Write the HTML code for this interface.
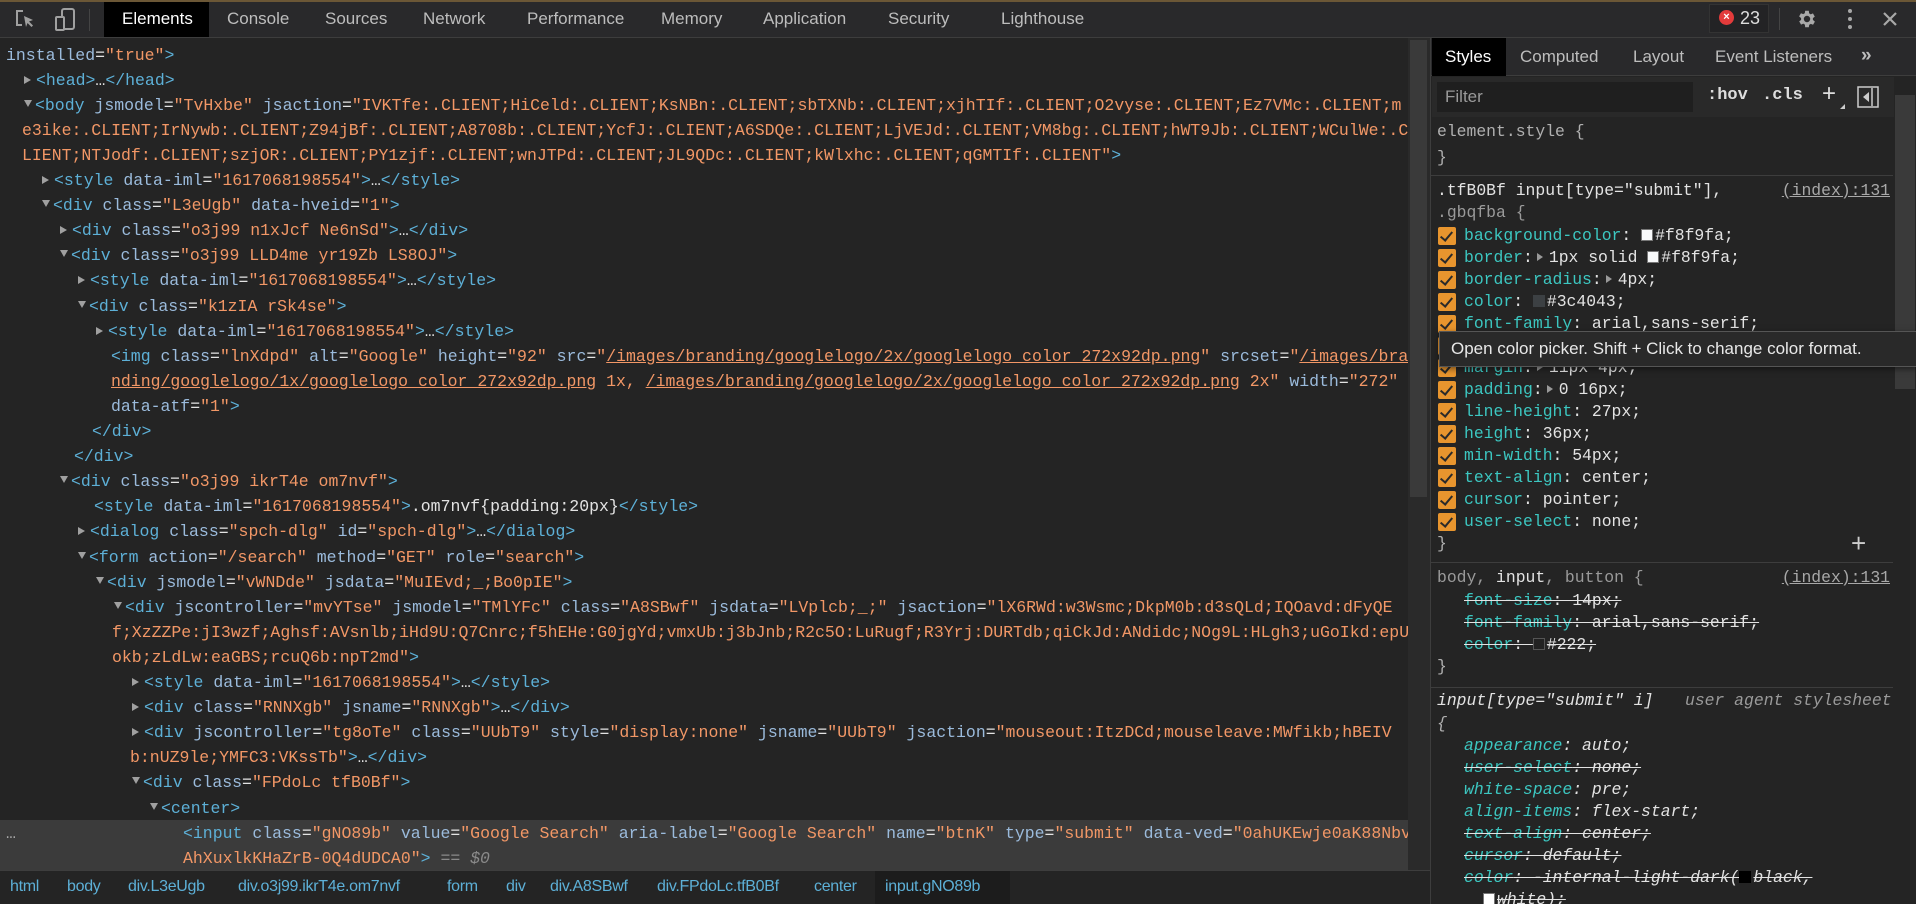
<!DOCTYPE html>
<html><head><meta charset="utf-8">
<style>
*{margin:0;padding:0;box-sizing:border-box}
body{width:1916px;height:904px;background:#242424;overflow:hidden;position:relative;font-family:"Liberation Sans",sans-serif;color:#e3e3e3}
.abs{position:absolute}
#tb{left:0;top:0;width:1916px;height:38px;background:#29292b;border-top:2px solid #6b5736;border-bottom:1px solid #3d3d3d;z-index:5}
.tab{position:absolute;top:7px;font-size:17px;color:#bdbdbd;white-space:nowrap;font-family:"Liberation Sans",sans-serif}
#el{left:0;top:38px;width:1408px;height:832px;overflow:hidden;font-family:"Liberation Mono",monospace;font-size:16.5px}
.r{position:absolute;left:0;height:25.1px;line-height:25.1px;white-space:pre;color:#e3e3e3}
.t{color:#5db0d7}.a{color:#9bbbdc}.v{color:#f29766}.u{text-decoration:underline}
.tri{display:inline-block;width:0;height:0;border-left:7px solid #a0a0a0;border-top:4.5px solid transparent;border-bottom:4.5px solid transparent;margin-right:5px;vertical-align:1px}
.tri.d{border-top:7px solid #a0a0a0;border-left:4.5px solid transparent;border-right:4.5px solid transparent;border-bottom:0;vertical-align:3px;margin-right:3px}
#sb{left:1430px;top:38px;width:486px;height:866px;background:#242424;border-left:1px solid #3d3d3d;font-family:"Liberation Mono",monospace;font-size:16.4px;overflow:hidden}
.s{position:absolute;left:33px;height:22px;line-height:22px;white-space:pre;color:#e3e3e3}
.p{color:#3cc7c1}
.cb{position:absolute;left:7px;width:18px;height:18px;background:#e8952e;border-radius:2px}
.cb:after{content:"";position:absolute;left:5px;top:2px;width:5px;height:10px;border-right:2.5px solid #2a2a2a;border-bottom:2.5px solid #2a2a2a;transform:rotate(40deg)}
.sw{display:inline-block;width:12px;height:12px;vertical-align:-1px;margin-right:2px;border:1px solid #777}
.ar{display:inline-block;width:0;height:0;border-left:6px solid #999;border-top:4px solid transparent;border-bottom:4px solid transparent;margin:0 6px 0 4px;vertical-align:1px}
.st{text-decoration:line-through}
.idx{position:absolute;right:26px;color:#a8a8a8;text-decoration:underline;white-space:pre}
.sep{position:absolute;left:0;width:462px;height:1px;background:#3d3d3d}
.bc{position:absolute;top:878px;font-size:16px;color:#5db0d7;white-space:nowrap;letter-spacing:-0.3px}
</style></head><body>

<div id="tb" class="abs">
  <svg class="abs" style="left:14px;top:6px" width="22" height="22" viewBox="0 0 22 22"><path d="M9 3H3v14h5" fill="none" stroke="#a0a0a0" stroke-width="2"/><path d="M10 8l9 4-4 1.5 4 4-1.5 1.5-4-4L12 19z" fill="#a0a0a0"/></svg>
  <svg class="abs" style="left:54px;top:5px" width="24" height="26" viewBox="0 0 24 26"><rect x="8" y="2" width="12" height="20" rx="2" fill="none" stroke="#a0a0a0" stroke-width="2"/><rect x="2" y="10" width="8" height="13" rx="1" fill="#29292b" stroke="#a0a0a0" stroke-width="2"/></svg>
  <div class="abs" style="left:89px;top:7px;width:1px;height:22px;background:#444"></div>
  <div class="abs" style="left:104px;top:0;width:105px;height:35px;background:#000"></div>
  <div class="tab" style="left:122px;color:#fff">Elements</div>
  <div class="tab" style="left:227px">Console</div>
  <div class="tab" style="left:325px">Sources</div>
  <div class="tab" style="left:423px">Network</div>
  <div class="tab" style="left:527px">Performance</div>
  <div class="tab" style="left:661px">Memory</div>
  <div class="tab" style="left:763px">Application</div>
  <div class="tab" style="left:888px">Security</div>
  <div class="tab" style="left:1001px">Lighthouse</div>
  <div class="abs" style="left:1709px;top:2px;width:60px;height:29px;background:#232325;border:1px solid #333"></div>
  <div class="abs" style="left:1719px;top:8px;width:15px;height:15px;border-radius:50%;background:#e33b3b;color:#fff;font-size:11px;line-height:15px;text-align:center;font-weight:bold">×</div>
  <div class="tab" style="left:1740px;top:6px;color:#ddd;font-size:18px">23</div>
  <div class="abs" style="left:1779px;top:6px;width:1px;height:22px;background:#444"></div>
  <svg class="abs" style="left:1796px;top:6px" width="22" height="22" viewBox="0 0 24 24"><path fill="#a8a8a8" d="M19.4 13a7.5 7.5 0 0 0 0-2l2.1-1.6-2-3.5-2.5 1a7 7 0 0 0-1.7-1L15 3h-4l-.4 2.7a7 7 0 0 0-1.7 1l-2.5-1-2 3.5L6.6 11a7.5 7.5 0 0 0 0 2l-2.1 1.6 2 3.5 2.5-1a7 7 0 0 0 1.7 1L11 21h4l.4-2.7a7 7 0 0 0 1.7-1l2.5 1 2-3.5zM13 15.5a3.5 3.5 0 1 1 0-7 3.5 3.5 0 0 1 0 7z" transform="translate(-1 0)"/></svg>
  <div class="abs" style="left:1848px;top:7px;width:4px;height:4px;border-radius:2px;background:#a8a8a8;box-shadow:0 8px 0 #a8a8a8,0 16px 0 #a8a8a8"></div>
  <svg class="abs" style="left:1882px;top:9px" width="16" height="16" viewBox="0 0 16 16"><path d="M2 2l12 12M14 2L2 14" stroke="#a8a8a8" stroke-width="2.2"/></svg>
</div>

<div id="el" class="abs">
<div class="r" style="top:-20.6px;left:6px"><span class="a">  http-equiv="Content-Type" content="text/html; charset=UTF-8" data-extension-version="3.0.0" data-extension-</span></div>
<div class="r" style="top:4.5px;left:6px"><span class="a">installed</span>=<span class="v">"true"</span><span class="t">&gt;</span></div>
<div class="r" style="top:29.6px;left:24px"><span class="tri"></span><span class="t">&lt;head&gt;</span>…<span class="t">&lt;/head&gt;</span></div>
<div class="r" style="top:54.7px;left:24px"><span class="tri d"></span><span class="t">&lt;body </span><span class="a">jsmodel</span>=<span class="v">"TvHxbe"</span> <span class="a">jsaction</span>=<span class="v">"IVKTfe:.CLIENT;HiCeld:.CLIENT;KsNBn:.CLIENT;sbTXNb:.CLIENT;xjhTIf:.CLIENT;O2vyse:.CLIENT;Ez7VMc:.CLIENT;m</span></div>
<div class="r" style="top:79.8px;left:22px"><span class="v">e3ike:.CLIENT;IrNywb:.CLIENT;Z94jBf:.CLIENT;A8708b:.CLIENT;YcfJ:.CLIENT;A6SDQe:.CLIENT;LjVEJd:.CLIENT;VM8bg:.CLIENT;hWT9Jb:.CLIENT;WCulWe:.C</span></div>
<div class="r" style="top:104.9px;left:22px"><span class="v">LIENT;NTJodf:.CLIENT;szjOR:.CLIENT;PY1zjf:.CLIENT;wnJTPd:.CLIENT;JL9QDc:.CLIENT;kWlxhc:.CLIENT;qGMTIf:.CLIENT"</span><span class="t">&gt;</span></div>
<div class="r" style="top:130px;left:42px"><span class="tri"></span><span class="t">&lt;style </span><span class="a">data-iml</span>=<span class="v">"1617068198554"</span><span class="t">&gt;</span>…<span class="t">&lt;/style&gt;</span></div>
<div class="r" style="top:155.1px;left:42px"><span class="tri d"></span><span class="t">&lt;div </span><span class="a">class</span>=<span class="v">"L3eUgb"</span> <span class="a">data-hveid</span>=<span class="v">"1"</span><span class="t">&gt;</span></div>
<div class="r" style="top:180.2px;left:60px"><span class="tri"></span><span class="t">&lt;div </span><span class="a">class</span>=<span class="v">"o3j99 n1xJcf Ne6nSd"</span><span class="t">&gt;</span>…<span class="t">&lt;/div&gt;</span></div>
<div class="r" style="top:205.3px;left:60px"><span class="tri d"></span><span class="t">&lt;div </span><span class="a">class</span>=<span class="v">"o3j99 LLD4me yr19Zb LS8OJ"</span><span class="t">&gt;</span></div>
<div class="r" style="top:230.4px;left:78px"><span class="tri"></span><span class="t">&lt;style </span><span class="a">data-iml</span>=<span class="v">"1617068198554"</span><span class="t">&gt;</span>…<span class="t">&lt;/style&gt;</span></div>
<div class="r" style="top:255.5px;left:78px"><span class="tri d"></span><span class="t">&lt;div </span><span class="a">class</span>=<span class="v">"k1zIA rSk4se"</span><span class="t">&gt;</span></div>
<div class="r" style="top:280.6px;left:96px"><span class="tri"></span><span class="t">&lt;style </span><span class="a">data-iml</span>=<span class="v">"1617068198554"</span><span class="t">&gt;</span>…<span class="t">&lt;/style&gt;</span></div>
<div class="r" style="top:305.7px;left:111px"><span class="t">&lt;img </span><span class="a">class</span>=<span class="v">"lnXdpd"</span> <span class="a">alt</span>=<span class="v">"Google"</span> <span class="a">height</span>=<span class="v">"92"</span> <span class="a">src</span>=<span class="v">"<span class="u">/images/branding/googlelogo/2x/googlelogo_color_272x92dp.png</span>"</span> <span class="a">srcset</span>=<span class="v">"<span class="u">/images/bra</span></span></div>
<div class="r" style="top:330.8px;left:111px"><span class="v"><span class="u">nding/googlelogo/1x/googlelogo_color_272x92dp.png</span> 1x, <span class="u">/images/branding/googlelogo/2x/googlelogo_color_272x92dp.png</span> 2x"</span> <span class="a">width</span>=<span class="v">"272"</span></div>
<div class="r" style="top:355.9px;left:111px"><span class="a">data-atf</span>=<span class="v">"1"</span><span class="t">&gt;</span></div>
<div class="r" style="top:381px;left:92px"><span class="t">&lt;/div&gt;</span></div>
<div class="r" style="top:406.1px;left:74px"><span class="t">&lt;/div&gt;</span></div>
<div class="r" style="top:431.2px;left:60px"><span class="tri d"></span><span class="t">&lt;div </span><span class="a">class</span>=<span class="v">"o3j99 ikrT4e om7nvf"</span><span class="t">&gt;</span></div>
<div class="r" style="top:456.3px;left:94px"><span class="t">&lt;style </span><span class="a">data-iml</span>=<span class="v">"1617068198554"</span><span class="t">&gt;</span>.om7nvf{padding:20px}<span class="t">&lt;/style&gt;</span></div>
<div class="r" style="top:481.4px;left:78px"><span class="tri"></span><span class="t">&lt;dialog </span><span class="a">class</span>=<span class="v">"spch-dlg"</span> <span class="a">id</span>=<span class="v">"spch-dlg"</span><span class="t">&gt;</span>…<span class="t">&lt;/dialog&gt;</span></div>
<div class="r" style="top:506.5px;left:78px"><span class="tri d"></span><span class="t">&lt;form </span><span class="a">action</span>=<span class="v">"/search"</span> <span class="a">method</span>=<span class="v">"GET"</span> <span class="a">role</span>=<span class="v">"search"</span><span class="t">&gt;</span></div>
<div class="r" style="top:531.6px;left:96px"><span class="tri d"></span><span class="t">&lt;div </span><span class="a">jsmodel</span>=<span class="v">"vWNDde"</span> <span class="a">jsdata</span>=<span class="v">"MuIEvd;_;Bo0pIE"</span><span class="t">&gt;</span></div>
<div class="r" style="top:556.7px;left:114px"><span class="tri d"></span><span class="t">&lt;div </span><span class="a">jscontroller</span>=<span class="v">"mvYTse"</span> <span class="a">jsmodel</span>=<span class="v">"TMlYFc"</span> <span class="a">class</span>=<span class="v">"A8SBwf"</span> <span class="a">jsdata</span>=<span class="v">"LVplcb;_;"</span> <span class="a">jsaction</span>=<span class="v">"lX6RWd:w3Wsmc;DkpM0b:d3sQLd;IQOavd:dFyQE</span></div>
<div class="r" style="top:581.8px;left:112px"><span class="v">f;XzZZPe:jI3wzf;Aghsf:AVsnlb;iHd9U:Q7Cnrc;f5hEHe:G0jgYd;vmxUb:j3bJnb;R2c5O:LuRugf;R3Yrj:DURTdb;qiCkJd:ANdidc;NOg9L:HLgh3;uGoIkd:epU</span></div>
<div class="r" style="top:606.9px;left:112px"><span class="v">okb;zLdLw:eaGBS;rcuQ6b:npT2md"</span><span class="t">&gt;</span></div>
<div class="r" style="top:632px;left:132px"><span class="tri"></span><span class="t">&lt;style </span><span class="a">data-iml</span>=<span class="v">"1617068198554"</span><span class="t">&gt;</span>…<span class="t">&lt;/style&gt;</span></div>
<div class="r" style="top:657.1px;left:132px"><span class="tri"></span><span class="t">&lt;div </span><span class="a">class</span>=<span class="v">"RNNXgb"</span> <span class="a">jsname</span>=<span class="v">"RNNXgb"</span><span class="t">&gt;</span>…<span class="t">&lt;/div&gt;</span></div>
<div class="r" style="top:682.2px;left:132px"><span class="tri"></span><span class="t">&lt;div </span><span class="a">jscontroller</span>=<span class="v">"tg8oTe"</span> <span class="a">class</span>=<span class="v">"UUbT9"</span> <span class="a">style</span>=<span class="v">"display:none"</span> <span class="a">jsname</span>=<span class="v">"UUbT9"</span> <span class="a">jsaction</span>=<span class="v">"mouseout:ItzDCd;mouseleave:MWfikb;hBEIV</span></div>
<div class="r" style="top:707.3px;left:130px"><span class="v">b:nUZ9le;YMFC3:VKssTb"</span><span class="t">&gt;</span>…<span class="t">&lt;/div&gt;</span></div>
<div class="r" style="top:732.4px;left:132px"><span class="tri d"></span><span class="t">&lt;div </span><span class="a">class</span>=<span class="v">"FPdoLc tfB0Bf"</span><span class="t">&gt;</span></div>
<div class="r" style="top:757.5px;left:150px"><span class="tri d"></span><span class="t">&lt;center&gt;</span></div>
<div class="abs" style="left:0;top:782px;width:1408px;height:50px;background:#3b3b3b"></div>
<div class="r" style="top:782.6px;left:6px;color:#aaa">…</div>
<div class="r" style="top:782.6px;left:183px"><span class="t">&lt;input </span><span class="a">class</span>=<span class="v">"gNO89b"</span> <span class="a">value</span>=<span class="v">"Google Search"</span> <span class="a">aria-label</span>=<span class="v">"Google Search"</span> <span class="a">name</span>=<span class="v">"btnK"</span> <span class="a">type</span>=<span class="v">"submit"</span> <span class="a">data-ved</span>=<span class="v">"0ahUKEwje0aK88Nbv</span></div>
<div class="r" style="top:807.7px;left:183px"><span class="v">AhXuxlkKHaZrB-0Q4dUDCA0"</span><span class="t">&gt;</span><span style="color:#8a8a8a"> == <i>$0</i></span></div>
</div>

<div class="abs" style="left:1408px;top:38px;width:22px;height:832px;background:#2a2a2a"></div>
<div class="abs" style="left:1410px;top:40px;width:17px;height:457px;background:#3a3a3a"></div>

<div class="abs" style="left:0;top:870px;width:1430px;height:34px;background:#242424;border-top:1px solid #3d3d3d"></div>
<div class="abs" style="left:875px;top:871px;width:135px;height:33px;background:#1c1c1c"></div>
<div class="bc" style="left:10px">html</div>
<div class="bc" style="left:67px">body</div>
<div class="bc" style="left:128px">div.L3eUgb</div>
<div class="bc" style="left:238px">div.o3j99.ikrT4e.om7nvf</div>
<div class="bc" style="left:447px">form</div>
<div class="bc" style="left:506px">div</div>
<div class="bc" style="left:550px">div.A8SBwf</div>
<div class="bc" style="left:657px">div.FPdoLc.tfB0Bf</div>
<div class="bc" style="left:814px">center</div>
<div class="bc" style="left:885px">input.gNO89b</div>

<div id="sb" class="abs">
  <div class="abs" style="left:0;top:0;width:486px;height:38px;border-bottom:1px solid #3d3d3d;background:#29292b"></div>
  <div class="abs" style="left:1px;top:0;width:74px;height:38px;background:#000"></div>
  <div class="tab" style="left:14px;top:9px;color:#fff">Styles</div>
  <div class="tab" style="left:89px;top:9px">Computed</div>
  <div class="tab" style="left:202px;top:9px">Layout</div>
  <div class="tab" style="left:284px;top:9px">Event Listeners</div>
  <div class="tab" style="left:430px;top:7px;font-weight:bold;font-size:19px">»</div>
  <div class="abs" style="left:1px;top:39px;width:462px;height:40px;background:#292929"></div>
  <div class="abs" style="left:6px;top:44px;width:256px;height:30px;background:#1f1f1f"></div>
  <div class="abs" style="left:14px;top:49px;font-size:17px;color:#9a9a9a;font-family:'Liberation Sans',sans-serif">Filter</div>
  <div class="abs" style="left:276px;top:48px;font-size:17px;color:#ddd;font-weight:bold;font-family:'Liberation Mono',monospace">:hov</div>
  <div class="abs" style="left:331px;top:48px;font-size:17px;color:#ddd;font-weight:bold;font-family:'Liberation Mono',monospace">.cls</div>
  <div class="abs" style="left:391px;top:42px;font-size:24px;color:#ddd;font-family:'Liberation Sans',sans-serif">+</div>
  <div class="abs" style="left:409px;top:66px;width:0;height:0;border-left:5px solid transparent;border-bottom:5px solid #ccc"></div>
  <svg class="abs" style="left:426px;top:48px" width="22" height="22" viewBox="0 0 22 22"><rect x="1" y="1" width="20" height="20" fill="none" stroke="#ccc" stroke-width="1.5"/><path d="M15 2v18" stroke="#ccc" stroke-width="1.5"/><path d="M12 6v10l-6-5z" fill="#ccc"/></svg>
  <div class="abs" style="left:464px;top:57px;width:20px;height:294px;background:#3a3a3a"></div>

  <div class="s" style="left:6px;top:83px;color:#b0b0b0">element.style {</div>
  <div class="s" style="left:6px;top:109px;color:#b0b0b0">}</div>
  <div class="sep" style="top:137px"></div>

  <div class="s" style="left:6px;top:142px">.tfB0Bf input[type="submit"],</div>
  <div class="idx" style="top:142px;line-height:22px">(index):131</div>
  <div class="s" style="left:6px;top:164px;color:#9a9a9a">.gbqfba {</div>

  <div class="cb" style="top:189px"></div><div class="s" style="top:187px"><span class="p">background-color</span>: <span class="sw" style="background:#f8f9fa"></span>#f8f9fa;</div>
  <div class="cb" style="top:211px"></div><div class="s" style="top:209px"><span class="p">border</span>:<span class="ar"></span>1px solid <span class="sw" style="background:#f8f9fa"></span>#f8f9fa;</div>
  <div class="cb" style="top:233px"></div><div class="s" style="top:231px"><span class="p">border-radius</span>:<span class="ar"></span>4px;</div>
  <div class="cb" style="top:255px"></div><div class="s" style="top:253px"><span class="p">color</span>: <span class="sw" style="background:#3c4043;border-color:#3c4043"></span>#3c4043;</div>
  <div class="cb" style="top:277px"></div><div class="s" style="top:275px"><span class="p">font-family</span>: arial,sans-serif;</div>
  <div class="cb" style="top:299px"></div><div class="s" style="top:297px"><span class="p">font-size</span>: 14px;</div>
  <div class="cb" style="top:321px"></div><div class="s" style="top:319px"><span class="p">margin</span>:<span class="ar"></span>11px 4px;</div>
  <div class="cb" style="top:343px"></div><div class="s" style="top:341px"><span class="p">padding</span>:<span class="ar"></span>0 16px;</div>
  <div class="cb" style="top:365px"></div><div class="s" style="top:363px"><span class="p">line-height</span>: 27px;</div>
  <div class="cb" style="top:387px"></div><div class="s" style="top:385px"><span class="p">height</span>: 36px;</div>
  <div class="cb" style="top:409px"></div><div class="s" style="top:407px"><span class="p">min-width</span>: 54px;</div>
  <div class="cb" style="top:431px"></div><div class="s" style="top:429px"><span class="p">text-align</span>: center;</div>
  <div class="cb" style="top:453px"></div><div class="s" style="top:451px"><span class="p">cursor</span>: pointer;</div>
  <div class="cb" style="top:475px"></div><div class="s" style="top:473px"><span class="p">user-select</span>: none;</div>
  <div class="s" style="left:6px;top:495px;color:#b0b0b0">}</div>
  <div class="abs" style="left:420px;top:490px;font-size:26px;color:#ccc;font-family:'Liberation Sans',sans-serif">+</div>
  <div class="sep" style="top:524px"></div>

  <div class="s" style="left:6px;top:529px;color:#9a9a9a">body, <span style="color:#e3e3e3">input</span>, button {</div>
  <div class="idx" style="top:529px;line-height:22px">(index):131</div>
  <div class="s st" style="top:552px"><span class="p">font-size</span>: 14px;</div>
  <div class="s st" style="top:574px"><span class="p">font-family</span>: arial,sans-serif;</div>
  <div class="s st" style="top:596px"><span class="p">color</span>: <span class="sw" style="background:#222;border-color:#555"></span>#222;</div>
  <div class="s" style="left:6px;top:618px;color:#b0b0b0">}</div>
  <div class="sep" style="top:649px"></div>

  <div class="s" style="left:6px;top:652px;font-style:italic">input[type="submit" i]</div>
  <div class="s" style="left:254px;top:652px;font-style:italic;color:#9a9a9a">user agent stylesheet</div>
  <div class="s" style="left:6px;top:675px;color:#b0b0b0;font-style:italic">{</div>
  <div class="s" style="top:697px;font-style:italic"><span class="p">appearance</span>: auto;</div>
  <div class="s st" style="top:719px;font-style:italic"><span class="p">user-select</span>: none;</div>
  <div class="s" style="top:741px;font-style:italic"><span class="p">white-space</span>: pre;</div>
  <div class="s" style="top:763px;font-style:italic"><span class="p">align-items</span>: flex-start;</div>
  <div class="s st" style="top:785px;font-style:italic"><span class="p">text-align</span>: center;</div>
  <div class="s st" style="top:807px;font-style:italic"><span class="p">cursor</span>: default;</div>
  <div class="s st" style="top:829px;font-style:italic"><span class="p">color</span>: -internal-light-dark(<span class="sw" style="background:#000;border-color:#000"></span>black,</div>
  <div class="s st" style="top:851px;left:52px;font-style:italic"><span class="sw" style="background:#fff"></span>white);</div>

  <div class="abs" style="left:8px;top:293px;width:478px;height:36px;background:#292929;border:1px solid #555;box-shadow:0 2px 6px rgba(0,0,0,.5)"></div>
  <div class="abs" style="left:20px;top:301px;font-size:17px;color:#e8e8e8;white-space:nowrap;font-family:'Liberation Sans',sans-serif">Open color picker. Shift + Click to change color format.</div>
</div>
</body></html>
